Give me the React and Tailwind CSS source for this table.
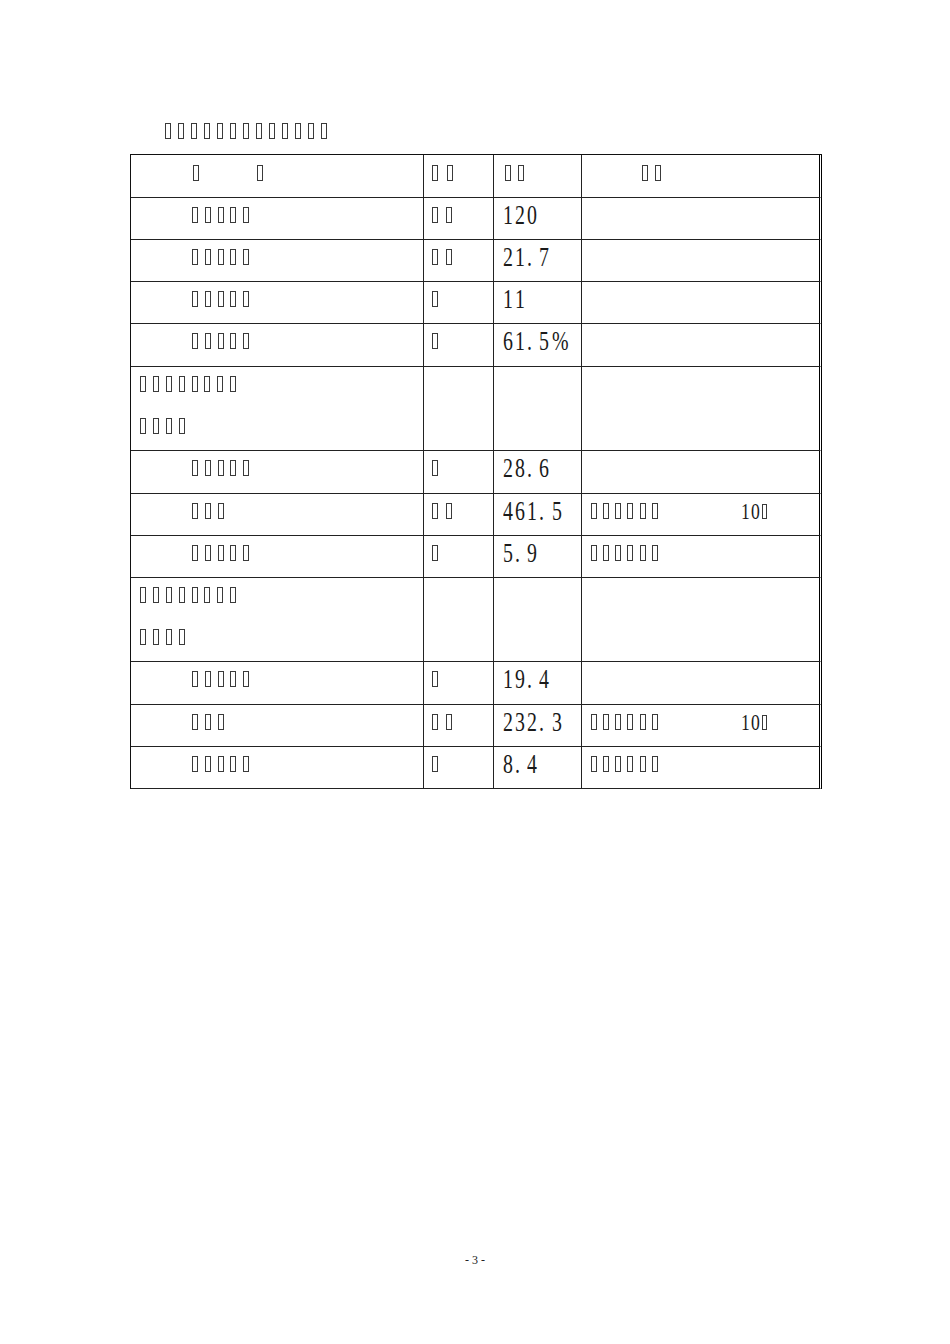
import React from 'react';

// missing-glyph boxes, as the scanned page shows them
function Tofu({ n, cell = 'w-[12.5px]' }) {
  return (
    <div className="flex">
      {Array.from({ length: n }).map((_, i) => (
        <span key={i} className={`${cell} shrink-0 h-[16px]`}>
          <span className="block w-[6px] h-[16px] border border-[#3a3a3a]" />
        </span>
      ))}
    </div>
  );
}

function Num({ s }) {
  return (
    <div className="flex -mt-[5.6px] text-[#1a1a1a] font-['Liberation_Serif',serif]">
      {s.split('').map((ch, i) => (
        <span key={i} className="w-[12.3px] shrink-0 h-[27px]">
          <span className="inline-block origin-left scale-x-[0.72] text-[27.6px] leading-none">{ch}</span>
        </span>
      ))}
    </div>
  );
}

function NoteTen() {
  return (
    <div className="flex items-start ml-[77px] text-[#1a1a1a] font-['Liberation_Serif',serif]">
      <div className="flex -mt-[3.5px]">
        <span className="w-[9.5px] shrink-0 h-[24px]">
          <span className="inline-block origin-left scale-x-[0.75] text-[23.5px] leading-none">1</span>
        </span>
        <span className="w-[11px] shrink-0 h-[24px]">
          <span className="inline-block origin-left scale-x-[0.75] text-[23.5px] leading-none">0</span>
        </span>
      </div>
      <span className="block w-[5px] h-[15px] mt-[1px] border border-[#3a3a3a]" />
    </div>
  );
}

const cell = 'border-r border-b border-[#222] pt-[9px]';

const rows = [
  { h: 'h-[42px]', name: 5, unit: 2, val: '120' },
  { h: 'h-[42px]', name: 5, unit: 2, val: '21.7' },
  { h: 'h-[42px]', name: 5, unit: 1, val: '11' },
  { h: 'h-[43px]', name: 5, unit: 1, val: '61.5%' },
  { h: 'h-[84px]', group: [8, 4] },
  { h: 'h-[43px]', name: 5, unit: 1, val: '28.6' },
  { h: 'h-[42px]', name: 3, unit: 2, val: '461.5', note: 6, ten: true },
  { h: 'h-[42px]', name: 5, unit: 1, val: '5.9', note: 6 },
  { h: 'h-[84px]', group: [8, 4] },
  { h: 'h-[43px]', name: 5, unit: 1, val: '19.4' },
  { h: 'h-[42px]', name: 3, unit: 2, val: '232.3', note: 6, ten: true },
  { h: 'h-[42px]', name: 5, unit: 1, val: '8.4', note: 6 },
];

export default function App() {
  return (
    <div className="w-[950px] h-[1344px] bg-white flex flex-col pt-[123px]">
      <div className="pl-[165px]">
        <Tofu n={13} cell="w-[13px]" />
      </div>

      <div className="mt-[15px] ml-[130px] w-[692px] grid grid-cols-[293px_70px_88px_240px] border-t border-l border-[#111]">
        {/* header */}
        <div className={`h-[43px] ${cell} pl-[62px] pt-[10px] flex gap-[58px]`}>
          <Tofu n={1} cell="w-[6px]" />
          <Tofu n={1} cell="w-[6px]" />
        </div>
        <div className={`h-[43px] ${cell} pl-[8px] pt-[10px]`}>
          <Tofu n={2} cell="w-[14.5px]" />
        </div>
        <div className={`h-[43px] ${cell} pl-[11px] pt-[10px]`}>
          <Tofu n={2} cell="w-[13.3px]" />
        </div>
        <div className={`h-[43px] ${cell} border-r-[3px] border-double border-r-black pl-[60px] pt-[10px]`}>
          <Tofu n={2} cell="w-[13.3px]" />
        </div>

        {rows.map((r, i) => (
          <React.Fragment key={i}>
            {r.group ? (
              <div className={`${r.h} ${cell} pl-[9px] flex flex-col gap-[26px]`}>
                <Tofu n={r.group[0]} cell="w-[12.9px]" />
                <Tofu n={r.group[1]} cell="w-[12.9px]" />
              </div>
            ) : (
              <div className={`${r.h} ${cell} pl-[61px]`}>
                <Tofu n={r.name} cell="w-[12.8px]" />
              </div>
            )}
            <div className={`${r.h} ${cell} pl-[8px]`}>
              {r.unit ? <Tofu n={r.unit} cell="w-[14px]" /> : null}
            </div>
            <div className={`${r.h} ${cell} pl-[8.5px]`}>
              {r.val ? <Num s={r.val} /> : null}
            </div>
            <div className={`${r.h} ${cell} border-r-[3px] border-double border-r-black pl-[8.5px] flex items-start`}>
              {r.note ? <Tofu n={r.note} cell="w-[12.3px]" /> : null}
              {r.ten ? <NoteTen /> : null}
            </div>
          </React.Fragment>
        ))}
      </div>

      <div className="mt-[464px] text-center text-[12px] leading-[14px] text-[#222] font-['Liberation_Serif',serif]">
        - 3 -
      </div>
    </div>
  );
}
